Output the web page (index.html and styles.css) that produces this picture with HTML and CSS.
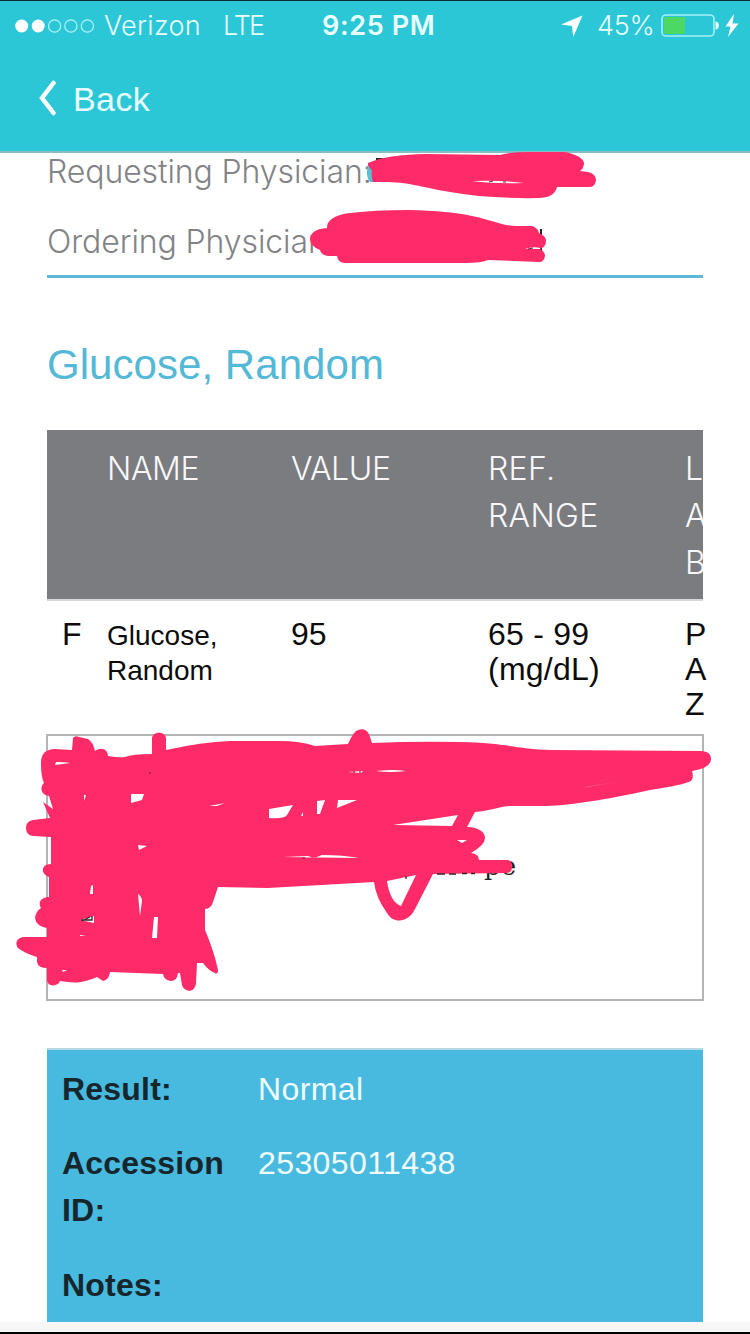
FILE: index.html
```html
<!DOCTYPE html>
<html lang="en">
<head>
<meta charset="utf-8">
<title>Glucose, Random</title>
<link rel="stylesheet" href="styles.css">
</head>
<body>
<div class="screen">
  <header class="header">
    <div class="status">
      <svg class="signal" width="82" height="16" viewBox="0 0 82 16">
        <circle cx="6.700" cy="8" r="6.5" fill="#fff"/><circle cx="23.2" cy="8" r="6.5" fill="#fff"/>
        <g fill="none" stroke="#b5f4fa" stroke-width="1.2"><circle cx="39.6" cy="8" r="6.1"/><circle cx="55.9" cy="8" r="6.1"/><circle cx="72.4" cy="8" r="6.1"/></g>
      </svg>
      <span class="carrier">Verizon</span>
      <span class="network">LTE</span>
      <span class="clock">9:25 PM</span>
      <svg class="location" width="22" height="23" viewBox="0 0 22 23"><path d="M21.500 0.500 0 9.500l11 1.500L12.300 22z" fill="#fff"/></svg>
      <span class="percent">45%</span>
      <svg class="battery" width="78" height="28" viewBox="0 0 78 28">
        <rect x="1" y="3" width="52" height="21" rx="4" fill="none" stroke="#a5f1f8" stroke-width="1.6"/>
        <path d="M5 5h19v17H5a2 2 0 0 1-2-2V7a2 2 0 0 1 2-2z" fill="#4bd964"/>
        <path d="M54.500 9.500c4.500 0 4.500 8 0 8z" fill="#e4fdff"/>
        <path d="M73 2 64.500 14.500h5L67 25 77.500 11.500h-6z" fill="#fff"/>
      </svg>
    </div>
    <nav class="nav">
      <svg class="chevron" width="18" height="36" viewBox="0 0 18 36"><path d="M15.500 3 4 18l11.500 15" fill="none" stroke="#fff" stroke-width="4.500" stroke-linecap="round" stroke-linejoin="miter"/></svg>
      <span class="back">Back</span>
    </nav>
  </header>

  <main class="content">
    <div class="physicians">
      <div class="physician"><span>Requesting Physician:</span></div>
      <div class="physician"><span>Ordering Physician:</span></div>
    </div>
    <h1 class="title"><span>Glucose, Random</span></h1>
    <div class="row head">
      <span></span><span>NAME</span><span>VALUE</span><span class="h-ref">REF.<br>RANGE</span><span>L<br>A<br>B</span>
    </div>
    <div class="row data">
      <span>F</span><span class="test">Glucose,<br>Random</span><span>95</span><span class="range">65 - 99<br>(mg/dL)</span><span>P<br>A<br>Z</span>
    </div>
    <div class="note"><span>pe</span></div>
    <div class="result">
      <b>Result:</b><span>Normal</span>
      <b>Accession<br>ID:</b><span>25305011438</span>
      <b>Notes:</b><span></span>
    </div>
  </main>
  <footer class="footer"></footer>

  <svg class="marker" width="750" height="1334" viewBox="0 0 750 1334">
    <path d="M368 165q-3 12 2 17h5v-17z" fill="#5bbfd3"/>
    <g fill="#222"><path d="M376 158h7v3h-7zM540 229h2v22h-2z"/></g>
    <g fill="#ff2a68">
      <path d="M368 163 376 160Q392 155 425 154L500 155Q508 152 530 152H565Q583 156 584 163Q584 168 580 171L588 172Q596 174 596 180Q595 187 590 187H557Q555 197 540 198Q490 199 450 192C420 187 410 182 382 182H373Q371 177 372 171L368 165z"/>
      <path d="M327 229Q326 216 350 213Q375 210 408 210Q450 211 472 216C492 220 503 226 516 226L532 226Q538 228 539 233Q546 236 546 241Q546 247 540 249Q545 252 545 256Q544 262 539 262L488 260Q482 263 465 263H345Q338 263 337 256H328Q321 255 320 250Q310 246 310 239Q311 229 327 228z"/>
      <path d="M44 783Q41 777 41 763Q41 749 55 749L72 750 73 738Q75 735 79 737L88 739Q93 742 95 751C102 746 108 750 108 756Q119 758 125 757Q132 754 152 754V738C153 731 165 731 166 738V750Q202 742 230 741H280Q300 741 315 746L348 744Q352 735 355 732C361 727 368 729 370 737L372 743Q417 741 460 742C507 743 517 749 551 750L700 751C709 751 711 755 711 759Q711 768 692 771Q694 778 691 781Q683 785 650 790C604 800 562 807 535 806H510C502 806 488 811 475 812L467 827C477 827 485 831 485 838Q485 845 471 853Q479 854 479 860H507Q512 860 512 867Q512 873 506 873L433 874 415 909C409 922 394 925 387 913Q376 898 374 882L268 888 218 887 213 902Q211 909 205 909V930Q214 951 218 970 218 975 215 973 209 971 203 963H197L196 983C195 994 184 992 182 985L180 973H178Q177 981 171 981 164 980 163 974L110 972Q109 980 103 981L97 977C81 984 73 983 60 981 58 987 47 987 47 980V968Q38 968 37 962V957Q24 953 18 948C14 942 18 937 25 937H47V928Q36 926 35 918 36 911 41 908C37 901 43 897 49 897L49 877C40 874 41 864 51 864V837L33 836Q26 835 26 828 26 821 33 820L50 818 43 802 53 809 49 796C40 795 40 786 44 783z"/>
    </g>
    <g fill="#fff">
      <path d="M472 181Q500 180 524 183 495 184 472 181zM525 249Q533 246 540 248V249z"/>
      <path d="M56 762Q65 762 70 763L55 765zM84 795h2l-2 6zM131 794h13l-2 6-11 3zM209 806l16-3-8 3zM138 845l9 1-8 4zM91 886l2-1v9h-3zM138 894q4 3 4 7l-2 15zM154 917h4l-1 21h-5zM80 920l14-4v7zM80 935l6 1h-6zM62 970h5l-4 2z"/>
      <path d="M269 809 293 805 287 815Q284 819 269 818zM303 812v4h-2zM317 801l8-1-5 14h-3zM338 800h19l-20 8zM376 771Q395 769 406 771 390 773 376 771zM348 772l15-1-2 2zM393 825 458 815 452 826zM283 857l25-1 6 2 8-3q21 0 37 3zM387 881l29-6-15 31Q390 902 387 881zM457 840l10 0-5 3z"/>
      <path d="M583 787.500l35-6-31 5.500z"/>
    </g>
    <path d="M81 920h11v-4M82 921l8-4M406 876v3M437 874h8M449 874h7M462 873.500h5M471 873.500h4" fill="none" stroke="#33242a" stroke-width="1.3"/>
    <path d="M489 182l4-1M503 182h3M528 249l5-1M149 773h2M353 772h2M359 772h2M302 858h3" fill="none" stroke="#5a2438" stroke-width="1"/>
  </svg>
</div>
</body>
</html>
```
FILE: styles.css
```css
* { box-sizing: border-box; }
body { margin: 0; background: #fff; }
.screen { position: relative; width: 750px; height: 1334px; overflow: hidden; display: flex; flex-direction: column; font-family: "Liberation Sans", Arial, sans-serif; font-size: 32px; color: #0c0c0c; }
.header { height: 153px; flex: none; background: #2bc7d7; border-top: 1px solid #102c31; border-bottom: 2px solid #8abcc1; color: #e8feff; }
.status { height: 50px; display: flex; align-items: center; padding-left: 15px; font-family: Inter, sans-serif; font-size: 27px; line-height: 50px; }
.status svg, .status span { flex: none; }
.signal { margin-right: 7px; }
.carrier { width: 119px; font-weight: 350; font-size: 27px; letter-spacing: .3px; }
.network { width: 99px; font-weight: 350; letter-spacing: -1.900px; }
.clock { width: 239px; font-weight: 600; letter-spacing: .65px; }
.location { margin-right: 14px; }
.percent { width: 64px; font-weight: 350; letter-spacing: -.2px; }
.nav { display: flex; align-items: center; height: 96px; padding-left: 38px; gap: 17px; }
.back { font-size: 34px; letter-spacing: .4px; line-height: 40px; margin-top: 0; }
.chevron { margin-top: -3px; }
.content { flex: none; height: 1169px; width: 656px; margin-left: 47px; }
.physicians { height: 125px; border-bottom: 3px solid #5bb9d4; color: #828386; font-family: Inter, sans-serif; font-weight: 300; font-size: 32px; letter-spacing: -.1px; line-height: 70px; }
.physician { height: 70px; white-space: nowrap; }
.physician:first-child { height: 53px; line-height: 37px; }
.physician:last-child { line-height: 71px; }
.title { margin: 0; height: 152px; padding-top: 59px; font-size: 42px; font-weight: 400; line-height: 56px; color: #54b8d7; letter-spacing: .05px; white-space: nowrap; }
.row { display: grid; grid-template-columns: 45px 184px 197px 197px 20px; padding-left: 15px; }
.head { height: 171px; padding-top: 15px; line-height: 47px; background: #7b7c80; border-bottom: 2px solid #d8d8dc; color: #f8f8fa; font-family: Inter, sans-serif; font-weight: 300; font-size: 32px; letter-spacing: -.4px; overflow: hidden; }
.h-ref { letter-spacing: .3px; }
.data { height: 133px; padding-top: 16px; line-height: 35px; white-space: nowrap; }
.test { font-size: 28px; padding-top: 1px; }
.range { letter-spacing: .25px; }
.note { width: 658px; height: 267px; margin-left: -1px; border: 2px solid #b4b4b4; padding: 115px 0 0 436px; font-family: "DejaVu Serif", serif; font-size: 26px; line-height: 30px; color: #222; }
.result { margin-top: 47px; height: 274px; padding: 16px 15px 0; border-top: 2px solid #b5d9e2; background: #49badf; display: grid; grid-template-columns: 196px 1fr; grid-template-rows: 74px 122px 62px; line-height: 47px; color: #f0fdff; letter-spacing: .4px; white-space: nowrap; }
.result b { color: #16262d; letter-spacing: .2px; }
.footer { height: 12px; flex: none; background: #f7f7f7; border-bottom: 2px solid #000; }
.marker { position: absolute; left: 0; top: 0; pointer-events: none; }
```
